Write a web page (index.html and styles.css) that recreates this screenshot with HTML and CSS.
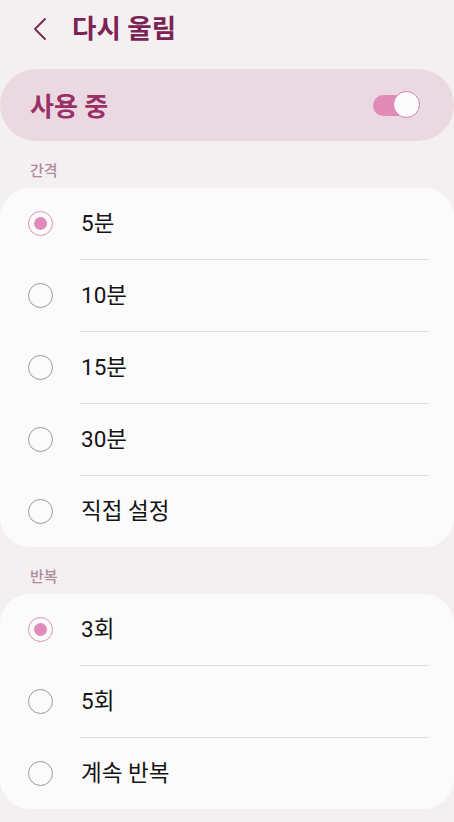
FILE: index.html
```html
<!DOCTYPE html>
<html lang="ko">
<head>
<meta charset="utf-8">
<title>다시 울림</title>
<link rel="stylesheet" href="styles.css">
</head>
<body>
<header class="header">
  <svg class="back" width="14" height="24" viewBox="0 0 14 24"><path d="M12 2 L2 12 L12 22" fill="none" stroke="#7b2352" stroke-width="1.8" stroke-linecap="round" stroke-linejoin="round"/></svg>
  <h1 class="title">다시 울림</h1>
</header>
<div class="enable">
  <span class="enable-text">사용 중</span>
  <span class="toggle"><span class="track"></span><span class="thumb"></span></span>
</div>
<div class="section-label">간격</div>
<div class="card">
  <div class="row"><span class="radio on"></span><span class="label">5분</span></div>
  <div class="divider"></div>
  <div class="row"><span class="radio"></span><span class="label">10분</span></div>
  <div class="divider"></div>
  <div class="row"><span class="radio"></span><span class="label">15분</span></div>
  <div class="divider"></div>
  <div class="row"><span class="radio"></span><span class="label">30분</span></div>
  <div class="divider"></div>
  <div class="row"><span class="radio"></span><span class="label">직접 설정</span></div>
</div>
<div class="section-label">반복</div>
<div class="card">
  <div class="row"><span class="radio on"></span><span class="label">3회</span></div>
  <div class="divider"></div>
  <div class="row"><span class="radio"></span><span class="label">5회</span></div>
  <div class="divider"></div>
  <div class="row"><span class="radio"></span><span class="label">계속 반복</span></div>
</div>
</body>
</html>
```
FILE: styles.css
```css
* { box-sizing: border-box; }
html, body { margin: 0; padding: 0; }
body {
  width: 454px;
  height: 822px;
  overflow: hidden;
  background: #f4f0f2;
  font-family: Roboto, "Noto Sans CJK KR", sans-serif;
}
.header {
  height: 69px;
  display: flex;
  align-items: center;
  padding: 0 0 12px 33px;
}
.back { display: block; }
.title {
  margin: 0 0 0 25px;
  font-size: 26.5px;
  font-weight: 700;
  color: #7b2352;
  line-height: 30px;
}
.enable {
  height: 72px;
  border-radius: 36px;
  background: #ebd9e2;
  display: flex;
  align-items: center;
  justify-content: space-between;
  padding: 0 34px 0 30px;
}
.enable-text {
  font-size: 26px;
  font-weight: 700;
  color: #9c2f67;
  line-height: 30px;
  padding-top: 3px;
}
.toggle {
  position: relative;
  width: 47px;
  height: 28px;
  display: flex;
  align-items: center;
}
.track {
  width: 40px;
  height: 21px;
  border-radius: 11px;
  background: #e28bb8;
}
.thumb {
  position: absolute;
  right: 0;
  top: 0;
  width: 27px;
  height: 27px;
  border-radius: 50%;
  background: #fdfcfd;
  border: 1.5px solid #cf85ac;
}
.section-label {
  height: 47px;
  display: flex;
  align-items: flex-end;
  padding: 0 0 7px 30px;
  font-size: 15px;
  font-weight: 500;
  line-height: 20px;
  color: #b08a9f;
}
.card {
  background: #fcfbfc;
  border-radius: 30px;
}
.row {
  height: 71px;
  display: flex;
  align-items: center;
  padding-left: 28px;
}
.radio {
  width: 25px;
  height: 25px;
  border-radius: 50%;
  border: 1.5px solid #9a9a9a;
  display: flex;
  align-items: center;
  justify-content: center;
  flex: none;
}
.radio.on { border-color: #d993ba; }
.radio.on::after {
  content: "";
  width: 13px;
  height: 13px;
  border-radius: 50%;
  background: #e08bba;
}
.label {
  margin-left: 28px;
  font-size: 22.5px;
  line-height: 28px;
  padding-bottom: 1px;
  color: #141414;
}
.divider {
  height: 1px;
  margin: 0 25px 0 80px;
  background: #e3dfe1;
}
```
